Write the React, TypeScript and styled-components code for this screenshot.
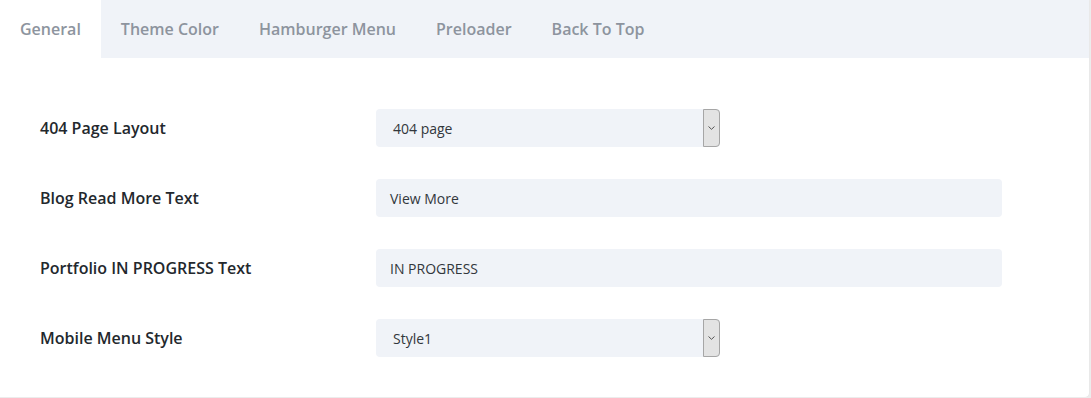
import React from 'react';
import styled, { createGlobalStyle } from 'styled-components';

const GlobalStyle = createGlobalStyle`
  html, body {
    margin: 0;
    padding: 0;
    background: #ececec;
  }
  * {
    box-sizing: border-box;
  }
`;

const Card = styled.div`
  width: 1089px;
  height: 397px;
  background: #ffffff;
  border-radius: 0 0 4px 0;
  box-shadow: 0 0 1px rgba(0, 0, 0, 0.12);
  font-family: 'Open Sans', sans-serif;
  overflow: hidden;
`;

const TabBar = styled.div`
  display: flex;
  height: 58px;
  background: #f0f3f8;
`;

const Tab = styled.div<{ $active?: boolean }>`
  display: flex;
  align-items: center;
  padding: 0 20px;
  font-size: 16px;
  font-weight: 600;
  color: #8d949e;
  background: ${(p) => (p.$active ? '#ffffff' : 'transparent')};
`;

const Form = styled.div`
  display: flex;
  flex-direction: column;
  gap: 32px;
  padding: 51px 0 0 40px;
`;

const Row = styled.div`
  display: flex;
  align-items: center;
  height: 38px;
`;

const Label = styled.div`
  width: 336px;
  flex-shrink: 0;
  font-size: 16px;
  font-weight: 600;
  color: #23282d;
`;

const TextField = styled.div`
  display: flex;
  align-items: center;
  width: 626px;
  height: 38px;
  padding: 0 14px;
  background: #f0f3f8;
  border-radius: 4px;
  font-size: 14px;
  color: #32373c;
`;

const SelectField = styled.div`
  display: flex;
  align-items: center;
  justify-content: space-between;
  width: 344px;
  height: 38px;
  padding-left: 17px;
  background: #f0f3f8;
  border-radius: 4px;
  font-size: 14px;
  color: #32373c;
`;

const ArrowBox = styled.div`
  display: flex;
  align-items: center;
  justify-content: center;
  width: 17px;
  height: 38px;
  background: #e3e3e3;
  border: 1px solid #a6a6a6;
  border-radius: 0 4px 4px 0;
`;

const Chevron = () => (
  <svg width="7" height="4" viewBox="0 0 7 4">
    <path d="M0.5 0.5 L3.5 3.3 L6.5 0.5" fill="none" stroke="#555" strokeWidth="1" />
  </svg>
);

const tabs = ['General', 'Theme Color', 'Hamburger Menu', 'Preloader', 'Back To Top'];

type Field = { label: string; value: string; select?: boolean };

const fields: Field[] = [
  { label: '404 Page Layout', value: '404 page', select: true },
  { label: 'Blog Read More Text', value: 'View More' },
  { label: 'Portfolio IN PROGRESS Text', value: 'IN PROGRESS' },
  { label: 'Mobile Menu Style', value: 'Style1', select: true },
];

export default function App() {
  return (
    <>
      <GlobalStyle />
      <Card>
        <TabBar>
          {tabs.map((t, i) => (
            <Tab key={t} $active={i === 0}>
              {t}
            </Tab>
          ))}
        </TabBar>
        <Form>
          {fields.map((f) => (
            <Row key={f.label}>
              <Label>{f.label}</Label>
              {f.select ? (
                <SelectField>
                  <span>{f.value}</span>
                  <ArrowBox>
                    <Chevron />
                  </ArrowBox>
                </SelectField>
              ) : (
                <TextField>{f.value}</TextField>
              )}
            </Row>
          ))}
        </Form>
      </Card>
    </>
  );
}
